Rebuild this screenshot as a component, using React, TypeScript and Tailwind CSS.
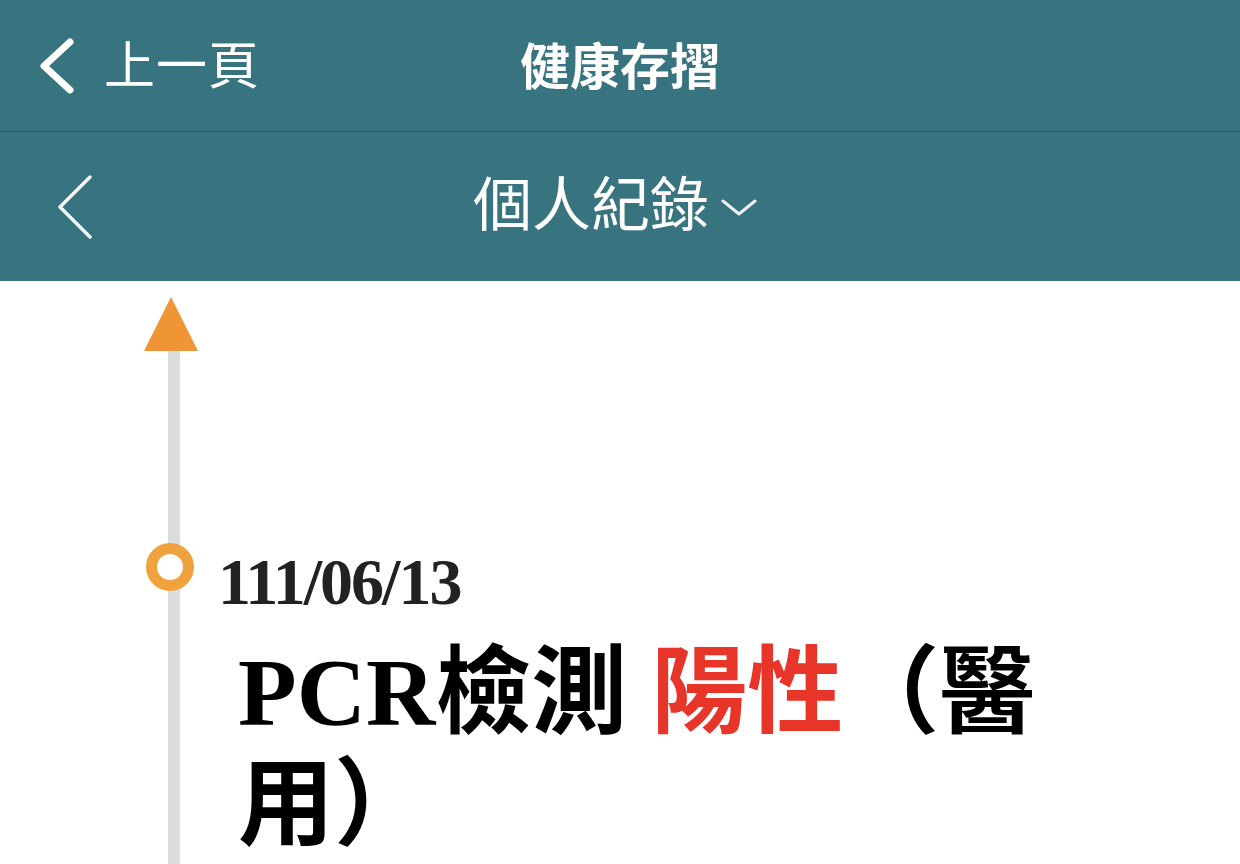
import React from "react";

const sans = '"Noto Sans CJK TC", "Noto Sans", sans-serif';

export default function App() {
  return (
    <div className="w-full h-[864px] overflow-hidden bg-white flex flex-col" style={{ fontFamily: sans }}>
      {/* Top bar */}
      <div className="h-[131px] bg-[#387380] grid grid-cols-[1fr_auto_1fr] items-center border-b border-[#27596a] box-content">
        <button className="flex items-center justify-self-start pl-[40px] text-white">
          <svg width="34" height="56" viewBox="0 0 34 56" fill="none" stroke="currentColor" strokeWidth="7" strokeLinecap="round" strokeLinejoin="round">
            <path d="M30 4 L4 28 L30 52" />
          </svg>
          <span className="ml-[30px] -mt-[7px] text-[51px] leading-none font-normal tracking-[1px]">上一頁</span>
        </button>
        <h1 className="-mt-[5px] text-white text-[50px] leading-none font-bold">健康存摺</h1>
        <div />
      </div>

      {/* Sub bar */}
      <div className="h-[149px] bg-[#387380] grid grid-cols-[1fr_auto_1fr] items-center">
        <button className="justify-self-start pl-[57px] text-white">
          <svg width="36" height="66" viewBox="0 0 36 66" fill="none" stroke="currentColor" strokeWidth="3.5" strokeLinecap="round" strokeLinejoin="round" className="opacity-95">
            <path d="M33 3 L3 33 L33 63" />
          </svg>
        </button>
        <div className="flex items-center text-white pr-[10px] -mt-[12px]">
          <span className="text-[59px] leading-none font-normal">個人紀錄</span>
          <svg width="36" height="20" viewBox="0 0 36 20" fill="none" stroke="currentColor" strokeWidth="3" strokeLinecap="round" strokeLinejoin="round" className="ml-[12px] mt-[14px] opacity-90">
            <path d="M2 3 L18 16 L34 3" />
          </svg>
        </div>
        <div />
      </div>

      {/* Timeline */}
      <div className="relative flex flex-1">
        <div className="ml-[144px] w-[54px] pt-[16px] flex flex-col">
          <div className="w-0 h-0 border-l-[27px] border-r-[27px] border-b-[54px] border-l-transparent border-r-transparent border-b-[#ef9535]" />
          <div className="ml-[24px] w-[12px] flex-1 bg-[#dcdcdc]" />
        </div>
        <div className="absolute left-[146px] top-[262px] w-[48px] h-[48px] rounded-full border-[11px] border-[#f0a23c] bg-white" />

        <div className="flex-1 pl-[20px] pr-[140px] pt-[268px]" style={{ fontFamily: '"Liberation Serif", "Noto Sans CJK TC", serif' }}>
          <div className="text-[66px] leading-none font-bold text-[#222] tracking-[-2px]">111/06/13</div>
          <div className="mt-[22px] pl-[20px] text-[96px] leading-[112px] font-bold text-black">
            PCR檢測 <span className="text-[#e8352a]">陽性</span>（醫用）
          </div>
        </div>
      </div>
    </div>
  );
}
